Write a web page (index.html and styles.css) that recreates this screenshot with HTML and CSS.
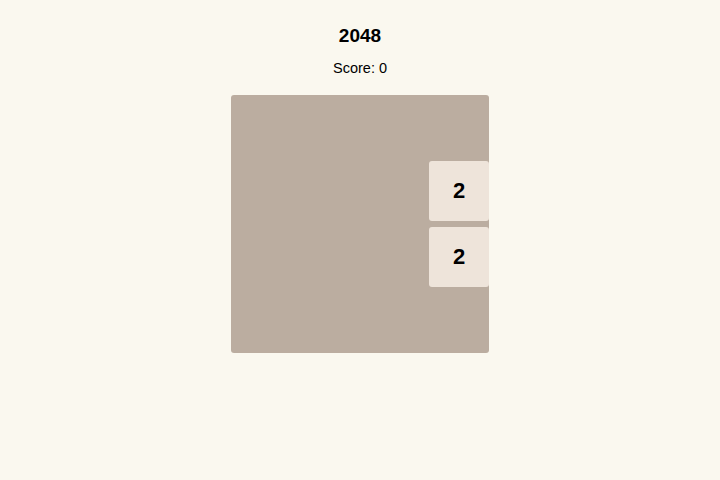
FILE: index.html
```html
<!DOCTYPE html>
<html>
<head>
<meta charset="utf-8">
<link rel="stylesheet" href="styles.css">
</head>
<body>
<main class="game">
  <h1 class="title">2048</h1>
  <div class="score">Score: 0</div>
  <div class="board">
    <div class="tile tile-2 r2 c4">2</div>
    <div class="tile tile-2 r3 c4">2</div>
  </div>
</main>
</body>
</html>
```
FILE: styles.css
```css
html, body {
  margin: 0;
  padding: 0;
  background: #faf8ef;
  font-family: "Liberation Sans", Arial, sans-serif;
  color: #000;
}
.game {
  display: flex;
  flex-direction: column;
  align-items: center;
  padding-top: 25px;
}
.title {
  margin: 0;
  font-size: 19px;
  line-height: 22px;
  font-weight: bold;
}
.score {
  margin-top: 13px;
  font-size: 14.5px;
  line-height: 16px;
}
.board {
  margin-top: 19px;
  width: 258px;
  height: 258px;
  background: #bbada0;
  border-radius: 3px;
  display: grid;
  grid-template-columns: repeat(4, 60px);
  grid-template-rows: repeat(4, 60px);
  gap: 6px;
}
.tile {
  display: flex;
  align-items: center;
  justify-content: center;
  border-radius: 3px;
  font-size: 22px;
  font-weight: bold;
  padding-bottom: 1px;
}
.tile-2 { background: #eee4da; }
.r1 { grid-row: 1; }
.r2 { grid-row: 2; }
.r3 { grid-row: 3; }
.r4 { grid-row: 4; }
.c1 { grid-column: 1; }
.c2 { grid-column: 2; }
.c3 { grid-column: 3; }
.c4 { grid-column: 4; }
```
